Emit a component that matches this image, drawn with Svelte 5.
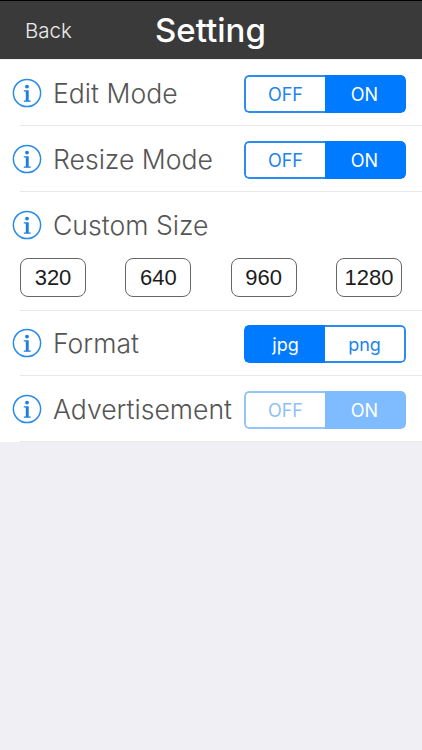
<script>
  const sizes = ['320', '640', '960', '1280'];
</script>

{#snippet info()}
  <svg class="info" viewBox="0 0 30 30" aria-hidden="true">
    <circle cx="15" cy="15" r="13.6" fill="none" stroke="#2a8be8" stroke-width="1.5" />
    <circle cx="15" cy="8.6" r="1.9" fill="#1a7fe0" />
    <path d="M11.8 12.2h4.9v10.2h2v1.3h-6.9v-1.3h2v-8.9h-2z" fill="#1a7fe0" />
  </svg>
{/snippet}

{#snippet seg(left, right, active, dim)}
  <div class="seg" class:dim>
    <div class="part" class:on={active === left}>{left}</div>
    <div class="part" class:on={active === right}>{right}</div>
  </div>
{/snippet}

<div class="screen">
  <header class="nav">
    <span class="back">Back</span>
    <span class="title">Setting</span>
  </header>

  <main class="list">
    <div class="row">
      {@render info()}
      <span class="label">Edit Mode</span>
      {@render seg('OFF', 'ON', 'ON', false)}
    </div>
    <div class="row">
      {@render info()}
      <span class="label">Resize Mode</span>
      {@render seg('OFF', 'ON', 'ON', false)}
    </div>
    <div class="row tall">
      <div class="head">
        {@render info()}
        <span class="label">Custom Size</span>
      </div>
      <div class="sizes">
        {#each sizes as size}
          <div class="size">{size}</div>
        {/each}
      </div>
    </div>
    <div class="row">
      {@render info()}
      <span class="label">Format</span>
      {@render seg('jpg', 'png', 'jpg', false)}
    </div>
    <div class="row">
      {@render info()}
      <span class="label">Advertisement</span>
      {@render seg('OFF', 'ON', 'ON', true)}
    </div>
  </main>
</div>

<style>
  :global(body) {
    background: #efeff4;
  }

  .screen {
    width: 422px;
    height: 750px;
    overflow: hidden;
    background: #efeff4;
    font-family: "Inter", "Liberation Sans", sans-serif;
  }

  .nav {
    height: 58px;
    border-top: 1px solid #000;
    background: #3a3a3a;
    display: flex;
    align-items: center;
    color: #fff;
  }

  .back {
    margin-left: 25px;
    width: 130px;
    font-size: 20.5px;
    color: #ececec;
    font-weight: 300;
  }

  .title {
    font-size: 33px;
    font-weight: 500;
  }

  .list {
    background: #fff;
    margin-top: 1px;
  }

  .row {
    height: 66px;
    box-sizing: border-box;
    padding-left: 12px;
    display: flex;
    align-items: center;
    position: relative;
  }

  .row::after {
    content: "";
    position: absolute;
    left: 20px;
    right: 0;
    bottom: 0;
    height: 1px;
    background: #e8e8e8;
  }

  .row.tall {
    height: 119px;
    margin-bottom: -1px;
    display: block;
    padding: 0;
  }

  .head {
    height: 66px;
    padding-left: 12px;
    display: flex;
    align-items: center;
  }

  .info {
    width: 30px;
    height: 30px;
    flex: none;
  }

  .label {
    margin-left: 11px;
    font-size: 26.6px;
    font-weight: 300;
    color: #555;
    flex: 1;
  }

  .seg {
    width: 162px;
    height: 38px;
    margin-top: 2px;
    margin-right: 16px;
    border-radius: 5px;
    display: flex;
    overflow: hidden;
    flex: none;
    background: #fff;
  }

  .seg.dim {
    opacity: 0.5;
  }

  .part {
    flex: 1;
    box-sizing: border-box;
    border: 2px solid #2b8cf2;
    display: flex;
    align-items: center;
    justify-content: center;
    font-size: 18px;
    font-weight: 400;
    color: #2184ee;
  }

  .part:first-child {
    border-right: 0;
    border-radius: 5px 0 0 5px;
  }

  .part:last-child {
    border-left: 0;
    border-radius: 0 5px 5px 0;
  }

  .part.on {
    background: #007aff;
    border-color: #007aff;
    color: #fff;
  }

  .sizes {
    display: flex;
    justify-content: space-between;
    padding: 0 20px;
  }

  .size {
    width: 66px;
    height: 39px;
    box-sizing: border-box;
    border: 1px solid #666;
    border-radius: 8px;
    display: flex;
    align-items: center;
    justify-content: center;
    font-family: "Liberation Sans", sans-serif;
    font-size: 22px;
    color: #1c1c1c;
  }
</style>
